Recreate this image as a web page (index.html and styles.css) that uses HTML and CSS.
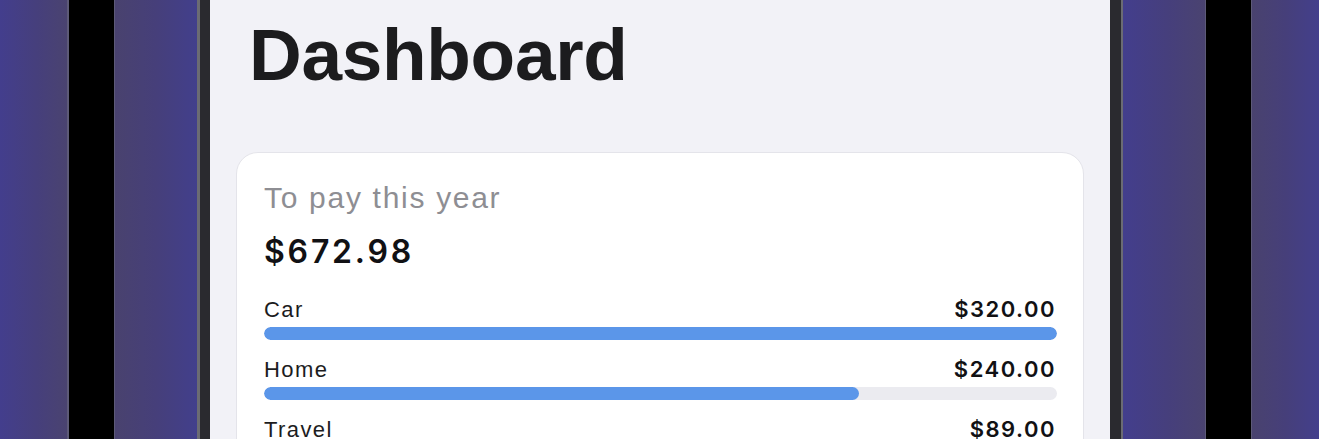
FILE: index.html
```html
<!DOCTYPE html>
<html lang="en">
<head>
<meta charset="utf-8">
<title>Dashboard</title>
<link rel="stylesheet" href="styles.css">
</head>
<body>
<div class="scene">
  <div class="stripe stripe-left-outer"></div>
  <div class="gap-black"></div>
  <div class="stripe stripe-left-inner"></div>
  <div class="phone">
    <div class="screen">
      <h1 class="title">Dashboard</h1>
      <section class="card">
        <div class="card-label">To pay this year</div>
        <div class="total">$672.98</div>
        <div class="rows">
          <div class="row">
            <div class="row-head"><span class="name">Car</span><span class="amount">$320.00</span></div>
            <div class="track"><div class="fill" style="width:100%"></div></div>
          </div>
          <div class="row">
            <div class="row-head"><span class="name">Home</span><span class="amount">$240.00</span></div>
            <div class="track"><div class="fill" style="width:75%"></div></div>
          </div>
          <div class="row">
            <div class="row-head"><span class="name">Travel</span><span class="amount">$89.00</span></div>
            <div class="track"><div class="fill" style="width:28%"></div></div>
          </div>
        </div>
      </section>
    </div>
  </div>
  <div class="stripe stripe-right-inner"></div>
  <div class="gap-black"></div>
  <div class="stripe stripe-right-outer"></div>
</div>
</body>
</html>
```
FILE: styles.css
```css
html, body {
  margin: 0;
  padding: 0;
  height: 100%;
  overflow: hidden;
  background: #000;
}

.scene {
  display: flex;
  height: 439px;
  width: 1319px;
}

.stripe {
  flex: none;
  height: 100%;
}

.stripe-left-outer {
  width: 67px;
  background: linear-gradient(to right, #433e8d 0%, #463f7c 55%, #4a4370 100%);
  border-right: 2px solid #5d5a78;
}

.stripe-left-inner {
  width: 82px;
  background: linear-gradient(to right, #49426e 0%, #463f7a 50%, #423f8c 100%);
  border-left: 1px solid #5d5a78;
}

.stripe-right-inner {
  width: 82px;
  background: linear-gradient(to right, #433e8d 0%, #463f7c 55%, #4a4370 100%);
  border-right: 1px solid #5d5a78;
}

.stripe-right-outer {
  flex: 1;
  background: linear-gradient(to right, #49426e 0%, #463f7a 50%, #433f8c 100%);
  border-left: 1px solid #5d5a78;
}

.gap-black {
  flex: none;
  width: 45px;
  height: 100%;
  background: #000;
}

.phone {
  flex: none;
  width: 926px;
  height: 100%;
  display: flex;
  background: #2a2a2f;
  border-left: 3px solid #6b6b73;
  border-right: 2px solid #6b6b73;
  padding: 0 11px 0 10px;
  box-sizing: border-box;
}

.screen {
  flex: 1;
  background: #f2f2f7;
  padding: 18px 26px 0 26px;
  font-family: "Liberation Sans", Arial, sans-serif;
  color: #1c1c1e;
}

.title {
  margin: 0 0 0 13px;
  font-family: "Liberation Sans", Arial, sans-serif;
  font-weight: 700;
  font-size: 73px;
  line-height: 74px;
  letter-spacing: -0.3px;
  color: #1c1c1e;
}

.card {
  margin-top: 60px;
  background: #ffffff;
  border: 1px solid #e4e4ea;
  border-radius: 22px;
  padding: 27px 26px 40px 27px;
}

.card-label {
  font-size: 30px;
  line-height: 36px;
  color: #8e8e93;
  letter-spacing: 1.7px;
}

.total {
  margin-top: 17px;
  font-family: "Inter", "Liberation Sans", sans-serif;
  font-weight: 600;
  font-size: 32px;
  line-height: 38px;
  letter-spacing: 2.8px;
  color: #111114;
}

.rows {
  margin-top: 25px;
  display: flex;
  flex-direction: column;
  gap: 16px;
}

.row-head {
  display: flex;
  justify-content: space-between;
  align-items: baseline;
  height: 26px;
  line-height: 26px;
}

.name {
  font-size: 22px;
  letter-spacing: 1.4px;
  color: #1c1c1e;
}

.amount {
  font-family: "Inter", "Liberation Sans", sans-serif;
  font-weight: 600;
  font-size: 22px;
  letter-spacing: 1.5px;
  color: #111114;
  margin-right: 1px;
}

.track {
  margin-top: 5px;
  height: 13px;
  border-radius: 7px;
  background: #ebebf0;
  overflow: hidden;
}

.fill {
  height: 100%;
  border-radius: 7px;
  background: #5b96e9;
}
```
